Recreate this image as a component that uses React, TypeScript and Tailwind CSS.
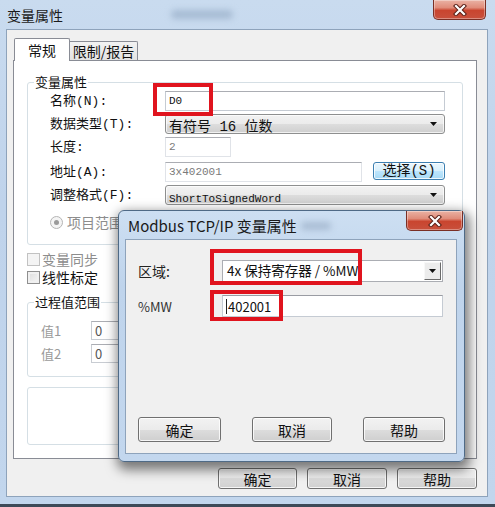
import React from "react";

const lbl = "font-['Liberation_Mono','Noto_Sans_CJK_SC',monospace]";
const cjk = "font-['Noto_Sans_CJK_SC','Noto_Sans',sans-serif]";
const mono = "font-['Liberation_Mono',monospace]";

function CloseButton({ className }: { className: string }) {
  return (
    <div
      className={`flex items-center justify-center rounded-b-[5px] border border-t-0 border-[#7a2f25] bg-[linear-gradient(180deg,#eab2a4_0%,#e08c7a_40%,#c9452f_55%,#c8503c_100%)] shadow-[inset_0_0_0_1px_rgba(255,255,255,0.35)] ${className}`}
    >
      <svg width="16" height="12" viewBox="0 0 16 12">
        <path d="M4 2 L12 10 M12 2 L4 10" stroke="#5a2018" strokeWidth="4.2" strokeLinecap="square" />
        <path d="M4 2 L12 10 M12 2 L4 10" stroke="#ffffff" strokeWidth="2.2" strokeLinecap="square" />
      </svg>
    </div>
  );
}

function Btn({ children, className, blue }: { children: React.ReactNode; className: string; blue?: boolean }) {
  return (
    <div
      className={`flex items-center justify-center rounded-[3px] border text-[14px] leading-none text-[#111] ${cjk} ${
        blue
          ? "border-[#3c7fb1] bg-[linear-gradient(180deg,#eaf6fd_0%,#d9f0fc_50%,#bee6fd_50%,#a7d9f5_100%)]"
          : "border-[#707070] bg-[linear-gradient(180deg,#f2f2f2_0%,#ebebeb_50%,#dddddd_50%,#cfcfcf_100%)]"
      } shadow-[inset_0_0_0_1px_rgba(255,255,255,0.8)] ${className}`}
    >
      {children}
    </div>
  );
}

function Arrow() {
  return (
    <svg width="8" height="5" viewBox="0 0 8 5">
      <path d="M0 0 H7 L3.5 4 Z" fill="#111" />
    </svg>
  );
}

function Combo({ children, className }: { children: React.ReactNode; className: string }) {
  return (
    <div
      className={`flex items-center justify-between rounded-[3px] border border-[#8e8f8f] bg-[linear-gradient(180deg,#f2f2f2_0%,#ebebeb_50%,#dddddd_50%,#cfcfcf_100%)] pl-[3px] pr-[6px] shadow-[inset_0_0_0_1px_rgba(255,255,255,0.7)] ${className}`}
    >
      <div className="whitespace-nowrap">{children}</div>
      <Arrow />
    </div>
  );
}

function TextBox({ children, className }: { children?: React.ReactNode; className: string }) {
  return (
    <div
      className={`flex items-center border border-[#c5cbd3] border-t-[#abadb3] bg-white pl-[3px] whitespace-nowrap ${className}`}
    >
      {children}
    </div>
  );
}

function Group({ title, className, children }: { title: string; className: string; children?: React.ReactNode }) {
  return (
    <div className={`relative rounded-[3px] border border-[#d5dfe5] ${className}`}>
      <div className={`absolute left-[6px] top-[-10px] bg-white px-[1px] text-[13px] leading-[18px] text-[#111] ${cjk}`}>
        {title}
      </div>
      {children}
    </div>
  );
}

function CheckBox({ label, disabled }: { label: string; disabled?: boolean }) {
  return (
    <div className="flex h-[14px] items-center gap-[2px]">
      <div
        className={`h-[13px] w-[13px] border ${
          disabled
            ? "border-[#c2c2c2] bg-[#f4f4f4]"
            : "border-[#8f8f8f] bg-[linear-gradient(135deg,#dcdcdc,#f6f6f6)] shadow-[inset_0_0_0_2px_#f0f0f0]"
        }`}
      />
      <div className={`text-[14px] leading-[14px] ${disabled ? "text-[#8d8d8d]" : "text-[#111]"} ${cjk}`}>{label}</div>
    </div>
  );
}

function FormRow({ label, children, className }: { label: string; children: React.ReactNode; className?: string }) {
  return (
    <div className={`flex h-[20px] items-center ${className ?? ""}`}>
      <div className={`w-[115px] text-[13px] leading-none text-[#111] ${lbl}`}>{label}</div>
      {children}
    </div>
  );
}

function Modal() {
  return (
    <div className="absolute left-[118px] top-[210px] h-[252px] w-[347px] rounded-[6px] border border-[#4f6a86] bg-[linear-gradient(180deg,#cddff2_0%,#bfd4ec_30%,#c3d7ee_100%)] shadow-[2px_5px_12px_3px_rgba(0,0,0,0.5)]">
      <div className="flex h-[28px] items-start">
        <div className={`ml-[9px] mt-[6px] text-[15px] leading-[18px] text-[#1a1a1a] ${cjk}`}>Modbus TCP/IP 变量属性</div>
        <div className="ml-[4px] mt-[11px] h-[8px] w-[30px] rounded-full bg-[#a9bcd3] blur-[3px]" />
        <CloseButton className="ml-auto mr-[1px] h-[20px] w-[57px]" />
      </div>
      <div className="ml-[6px] h-[215px] w-[332px] border border-[#8ea3bb] bg-[#f0f0f0]">
        <div className="mt-[20px] flex items-center">
          <div className={`ml-[12px] w-[84px] text-[14px] leading-none text-[#222] ${cjk}`}>区域:</div>
          <div className="flex h-[22px] w-[221px] items-center justify-between border border-[#abadb3] bg-white pl-[4px]">
            <div className={`text-[13.5px] leading-none text-[#111] ${cjk}`}>4x 保持寄存器 / %MW</div>
            <div className="mr-[1px] flex h-[18px] w-[17px] items-center justify-center border border-[#f8f8f8] border-b-[#6a6a6a] border-r-[#6a6a6a] bg-[#ececec]">
              <Arrow />
            </div>
          </div>
        </div>
        <div className="mt-[13px] flex items-center">
          <div className={`ml-[12px] w-[84px] text-[13px] leading-none text-[#333] ${cjk}`}>%MW</div>
          <div className="flex h-[22px] w-[221px] items-center border border-[#c5cbd3] border-t-[#9a9ca3] bg-white pl-[3px]">
            <div className="mr-[1px] h-[15px] w-px bg-[#222]" />
            <div className={`text-[13px] leading-none text-[#111] ${cjk}`}>402001</div>
          </div>
        </div>
        <div className="ml-[12px] mt-[100px] flex gap-[31px]">
          <Btn className="h-[25px] w-[83px]">确定</Btn>
          <Btn className="h-[25px] w-[80px]">取消</Btn>
          <Btn className="h-[25px] w-[82px]">帮助</Btn>
        </div>
      </div>
    </div>
  );
}

export default function App() {
  return (
    <div
      className={`relative h-[507px] w-[495px] overflow-hidden border-b-[3px] border-[#3d4a58] bg-[linear-gradient(180deg,#c9dbef_0%,#bfd3eb_40%,#c2d6ed_100%)] ${cjk}`}
    >
      <div className="flex h-[29px] items-start">
        <div className="ml-[7px] mt-[6px] text-[14px] leading-[18px] text-[#1a1a1a]">变量属性</div>
        <div className="ml-[108px] mt-[10px] h-[9px] w-[62px] rounded-full bg-[#a6bbd3] blur-[3px]" />
        <CloseButton className="ml-auto mr-[9px] h-[20px] w-[53px]" />
      </div>

      <div className="ml-[6px] h-[468px] w-[482px] border border-[#8ea3bb] bg-[#f0f0f0]">
        <div className="relative z-10 ml-[7px] mt-[8px] flex h-[23px] items-end">
          <div className="h-[23px] w-[56px] rounded-t-[2px] border border-b-0 border-[#898c95] bg-white pt-[2px] text-center text-[14px] leading-[18px] text-[#111]">
            常规
          </div>
          <div className="mb-[1px] h-[19px] w-[68px] rounded-tr-[2px] border border-b-0 border-l-0 border-[#898c95] bg-[linear-gradient(180deg,#f2f2f2,#e3e3e3)] text-center text-[14px] leading-[18px] text-[#111]">
            限制/报告
          </div>
        </div>

        <div className="-mt-px ml-[6px] flex h-[399px] w-[464px] flex-col border border-[#898c95] bg-white">
          <Group title="变量属性" className="ml-[13px] mt-[21px] h-[163px] w-[436px]">
            <div className="ml-[22px] mt-[8px] flex flex-col">
              <FormRow label="名称(N):">
                <TextBox className="h-[20px] w-[280px]">
                  <span className={`text-[11px] text-[#111] ${mono}`}>D0</span>
                </TextBox>
              </FormRow>
              <FormRow label="数据类型(T):" className="mt-[3px]">
                <Combo className="h-[20px] w-[280px]">
                  <span className={`text-[14px] leading-none text-[#111] ${lbl}`}>有符号 16 位数</span>
                </Combo>
              </FormRow>
              <FormRow label="长度:" className="mt-[3px]">
                <TextBox className="h-[20px] w-[66px] border-[#e0e3e8]">
                  <span className={`text-[11px] text-[#7a7a7a] ${mono}`}>2</span>
                </TextBox>
              </FormRow>
              <FormRow label="地址(A):" className="mt-[5px]">
                <TextBox className="h-[20px] w-[197px] border-[#e0e3e8]">
                  <span className={`text-[11px] text-[#7a7a7a] ${mono}`}>3x402001</span>
                </TextBox>
                <Btn blue className="ml-[11px] h-[18px] w-[72px] self-start text-[13px]">
                  <span className={lbl}>选择(S)</span>
                </Btn>
              </FormRow>
              <FormRow label="调整格式(F):" className="mt-[3px]">
                <Combo className="h-[20px] w-[280px]">
                  <span className={`text-[11px] leading-none text-[#111] ${mono}`}>ShortToSignedWord</span>
                </Combo>
              </FormRow>
              <div className="mt-[10px] flex h-[14px] items-center gap-[4px]">
                <div className="flex h-[13px] w-[13px] items-center justify-center rounded-full border border-[#b5b5b5] bg-[#f4f4f4]">
                  <div className="h-[5px] w-[5px] rounded-full bg-[#9a9a9a]" />
                </div>
                <div className="text-[14px] leading-none text-[#8d8d8d]">项目范围</div>
              </div>
            </div>
          </Group>

          <div className="ml-[13px] mt-[7px] flex flex-col gap-[4px]">
            <CheckBox label="变量同步" disabled />
            <CheckBox label="线性标定" />
          </div>

          <Group title="过程值范围" className="ml-[13px] mt-[18px] h-[75px] w-[300px]">
            <div className="ml-[13px] mt-[18px] flex flex-col gap-[4px]">
              <div className="flex h-[19px] items-center">
                <div className="w-[50px] text-[13px] leading-none text-[#9a9a9a]">值1</div>
                <TextBox className="h-[19px] w-[120px] border-[#c8ccd2]">
                  <span className="text-[13px] text-[#555]">0</span>
                </TextBox>
              </div>
              <div className="flex h-[19px] items-center">
                <div className="w-[50px] text-[13px] leading-none text-[#9a9a9a]">值2</div>
                <TextBox className="h-[19px] w-[120px] border-[#c8ccd2]">
                  <span className="text-[13px] text-[#555]">0</span>
                </TextBox>
              </div>
            </div>
          </Group>

          <div className="ml-[13px] mt-[10px] h-[58px] w-[300px] rounded-[3px] border border-[#d5dfe5]" />
        </div>

        <div className="mt-[9px] flex w-[470px] justify-end gap-[10px]">
          <Btn className="h-[21px] w-[79px] border-[#4f7fa8] bg-[linear-gradient(180deg,#eef3f7_0%,#e3eaf0_50%,#d2dce5_50%,#c6d2dd_100%)]">确定</Btn>
          <Btn className="h-[21px] w-[80px]">取消</Btn>
          <Btn className="h-[21px] w-[80px]">帮助</Btn>
        </div>
      </div>

      <Modal />

      <div className="absolute left-[153px] top-[83px] h-[33px] w-[60px] border-[4px] border-[#e0141e]" />
      <div className="absolute left-[210px] top-[249px] h-[36px] w-[152px] border-[4px] border-[#e0141e]" />
      <div className="absolute left-[210px] top-[290px] h-[31px] w-[73px] border-[4px] border-[#e0141e]" />
    </div>
  );
}
